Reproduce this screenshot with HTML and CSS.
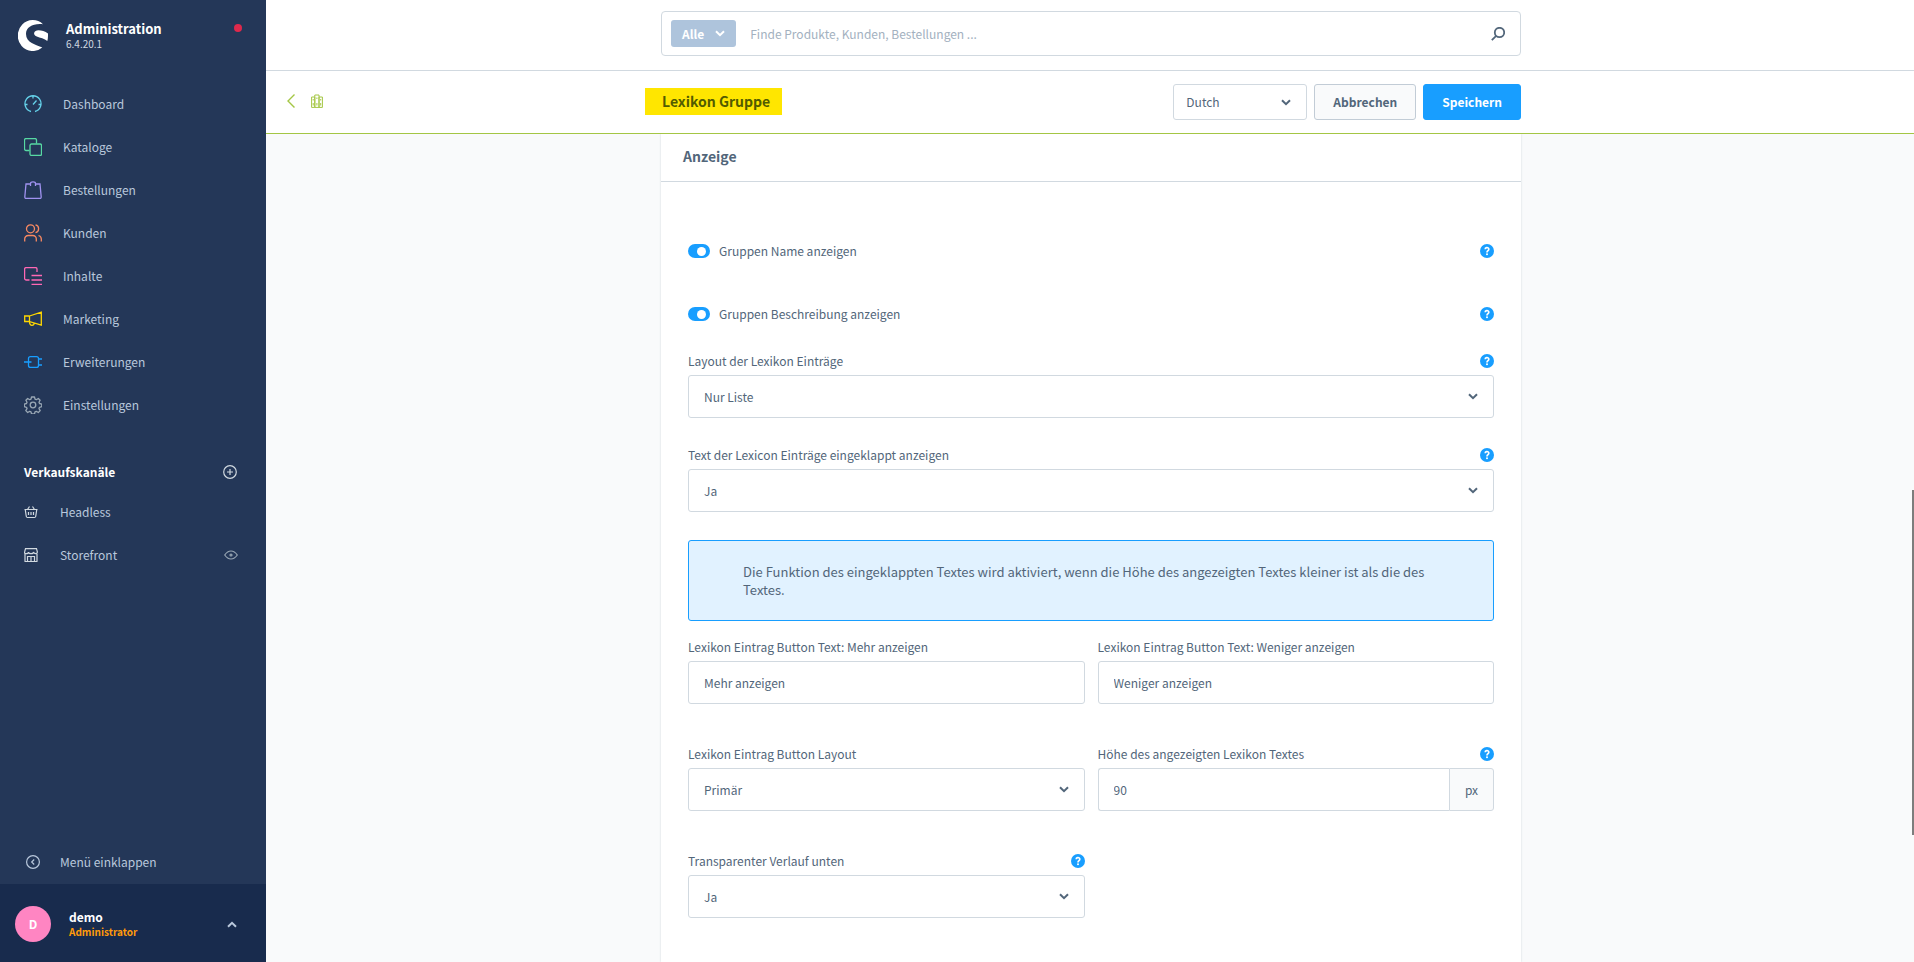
FILE: index.html
```html
<!DOCTYPE html>
<html lang="de">
<head>
<meta charset="utf-8">
<meta name="viewport" content="width=device-width, initial-scale=1">
<title>Lexikon Gruppe | Administration</title>
<link rel="stylesheet" href="styles.css">
</head>
<body>
<svg class="sprite" aria-hidden="true">
  <symbol id="chevron" viewBox="0 0 10 7"><path d="M1 1.2 5 5.2 9 1.2" fill="none" stroke="currentColor" stroke-width="2"/></symbol>
  <symbol id="help" viewBox="0 0 14 14"><circle cx="7" cy="7" r="7" fill="#189eff"/><path d="M5.200 5.300a1.800 1.700 0 1 1 2.700 1.400Q7 7.200 7 8.400" fill="none" stroke="#fff" stroke-width="1.700"/><circle cx="7" cy="10.300" r="1" fill="#fff"/></symbol>
</svg>
<div class="app">
  <aside class="sidebar">
    <header class="brand">
      <svg class="brand-logo" viewBox="0 0 30 31"><path fill="#fff" d="M25 4.200A15 15.500 0 1 0 24.300 27.500C18 24.500 8 23 8 14 8 7 15 3.200 25 4.200Z"/><path fill="#fff" d="M30 13.500v2.500q0 2.500-.7 5c-2.500-2.200-7.500-3.300-10.500-4.500-4.500-2-3-6.300 1.700-6.300 3 0 6.500.8 9.500 3.300Z"/></svg>
      <div class="brand-text">
        <strong class="brand-name">Administration</strong>
        <span class="brand-version">6.4.20.1</span>
      </div>
      <span class="status-dot"></span>
    </header>
    <nav class="nav">
      <a class="nav-item" href="#"><svg class="nav-icon c-cyan" viewBox="0 0 18 18"><path d="M7 16.500A8 8 0 1 1 11 16.500M9 1v2.500M1 9.500h2.500M17 9.500h-2.500M9 9.500l3.500-4"/></svg>Dashboard</a>
      <a class="nav-item" href="#"><svg class="nav-icon c-green" viewBox="0 0 18 18"><rect x="6" y="6" width="11.500" height="11.500" rx="1.500"/><path d="M5.500 12.500H2A1.500 1.500 0 0 1 .5 11V2A1.500 1.500 0 0 1 2 .5h9A1.500 1.500 0 0 1 12.500 2v3.500"/></svg>Kataloge</a>
      <a class="nav-item" href="#"><svg class="nav-icon c-violet" viewBox="0 0 18 18"><path d="M4.500 3H2L.8 16q0 1.500 1.500 1.500h13.400q1.500 0 1.500-1.500L16 3h-2.500M6.500 5V2.500Q6.500.8 9 .8t2.500 1.700V5M6.500 3h-2M11.500 3h2"/></svg>Bestellungen</a>
      <a class="nav-item" href="#"><svg class="nav-icon c-orange" viewBox="0 0 18 18"><circle cx="6.500" cy="4.800" r="4"/><path d="M.7 17.500v-2.500a3.500 3.500 0 0 1 3.500-3.500h4.600a3.500 3.500 0 0 1 3.500 3.500v2.500M11.500.9a4 4 0 0 1 0 7.800M14.500 11.500q2.800.8 2.800 3.500v2.500"/></svg>Kunden</a>
      <a class="nav-item" href="#"><svg class="nav-icon c-pink" viewBox="0 0 18 18"><path d="M5.500 13H2A1.500 1.500 0 0 1 .6 11.500V2A1.500 1.500 0 0 1 2 .6h9.500A1.500 1.500 0 0 1 13 2v3M7.500 8.500H18M7.500 13H18M7.500 17.400H18"/></svg>Inhalte</a>
      <a class="nav-item" href="#"><svg class="nav-icon c-yellow" viewBox="0 0 18 18"><path d="M5.500 6 17.300 2.200v13L5.500 11.500ZM5.500 6H.7v5.500h4.800M5.500 11.500q0 3.800 2.500 3.800 2 0 2.300-2.300"/></svg>Marketing</a>
      <a class="nav-item" href="#"><svg class="nav-icon c-blue" viewBox="0 0 18 18"><rect x="4.500" y="3.600" width="10" height="10.800" rx="2"/><path d="M0 9h7.500M14.500 6H18M14.500 12H18"/></svg>Erweiterungen</a>
      <a class="nav-item" href="#"><svg class="nav-icon c-grey" viewBox="0 0 18 18"><circle cx="9" cy="9" r="2.800"/><path d="M7.500 1h3l.5 2.200 1.300.5 2-1.200 1.800 1.800-1.100 2 .5 1.200 2.300.6v2.600l-2.300.6-.5 1.300 1.200 2-1.900 1.900-2-1.200-1.300.5-.5 2.200h-3L7 15.800l-1.300-.5-2 1.200-1.900-1.900 1.200-2-.5-1.300-2.200-.6V8.100l2.200-.6.5-1.200-1.100-2 1.800-1.800 2 1.200L7 3.200Z" stroke-linejoin="round"/></svg>Einstellungen</a>
    </nav>
    <section class="channels">
      <div class="channels-head">
        <h2 class="channels-title">Verkaufskanäle</h2>
        <button class="icon-button" type="button" aria-label="Verkaufskanal hinzufügen"><svg class="icon-m" viewBox="0 0 14 14"><circle cx="7" cy="7" r="6.300"/><path d="M7 4v6M4 7h6"/></svg></button>
      </div>
      <a class="channel" href="#"><svg class="icon-m" viewBox="0 0 14 14"><path d="M.5 4.500h13M1.300 5l1 6.500q.2 1 1.200 1h7q1 0 1.200-1l1-6.500M4.500 7v3M7 7v3M9.500 7v3M3.500 4.500 5.500 1.500M10.500 4.500 8.500 1.500"/></svg>Headless</a>
      <a class="channel" href="#"><svg class="icon-m" viewBox="0 0 14 14"><path d="M1 13.500V6M13 13.500V6M.5 13.500h13M1.500.6h11l.9 3.400q0 1.700-1.700 1.700T9.500 4q0 1.700-2.500 1.700T4.500 4q0 1.700-2.200 1.700T.6 4ZM3.500 13.500v-5h7v5M7 8.500v5"/></svg><span class="channel-name">Storefront</span><svg class="icon-m icon-eye" viewBox="0 0 14 14"><path d="M.7 7Q3.500 3 7 3t6.300 4Q10.500 11 7 11T.7 7Z"/><circle cx="7" cy="7" r="1"/></svg></a>
    </section>
    <button class="collapse" type="button"><svg class="icon-m" viewBox="0 0 14 14"><circle cx="7" cy="7" r="6.400"/><path d="M8.200 4.500 5.700 7l2.500 2.500"/></svg>Menü einklappen</button>
    <button class="user" type="button">
      <span class="avatar">D</span>
      <span class="user-text"><span class="user-name">demo</span><span class="user-role">Administrator</span></span>
      <svg class="chevron chevron-up"><use href="#chevron"/></svg>
    </button>
  </aside>

  <main class="main">
    <div class="topbar">
      <form class="search">
        <button class="search-type" type="button">Alle<svg class="chevron"><use href="#chevron"/></svg></button>
        <input class="search-input" type="search" placeholder="Finde Produkte, Kunden, Bestellungen ..." aria-label="Suche">
        <svg class="search-icon" viewBox="0 0 14 14"><circle cx="8.500" cy="5.500" r="4.700"/><path d="M5.200 8.800.8 13.200"/></svg>
      </form>
    </div>
    <div class="smartbar">
      <div class="smartbar-back">
        <a class="back-link" href="#" aria-label="Zurück"><svg class="back-icon" viewBox="0 0 8 14"><path d="M7.500.5 1 7l6.500 6.500"/></svg></a>
        <svg class="module-icon" viewBox="0 0 12 14"><path d="M.6 3h3.200v10.400H.6ZM3.800 1h4.200v12.400H3.800ZM8 3h3.400v10.400H8ZM2.200 9v2.500M5.900 9v2.500M9.700 9v2.500M2.200 5v1.500M5.900 3.500V5M9.700 5v1.500"/></svg>
      </div>
      <div class="smartbar-content">
        <h1 class="title"><mark class="title-mark">Lexikon Gruppe</mark></h1>
        <div class="actions">
          <span class="select select-small"><select aria-label="Sprache"><option>Dutch</option></select><svg class="chevron"><use href="#chevron"/></svg></span>
          <button class="button" type="button">Abbrechen</button>
          <button class="button button-primary" type="button">Speichern</button>
        </div>
      </div>
    </div>
    <div class="content">
      <section class="card">
        <h2 class="card-title">Anzeige</h2>
        <form class="card-body">
          <div class="switch-row">
            <input class="switch" type="checkbox" id="show-name" checked><label for="show-name">Gruppen Name anzeigen</label>
            <svg class="help"><use href="#help"/></svg>
          </div>
          <div class="switch-row">
            <input class="switch" type="checkbox" id="show-description" checked><label for="show-description">Gruppen Beschreibung anzeigen</label>
            <svg class="help"><use href="#help"/></svg>
          </div>
          <div class="field field-wide">
            <div class="field-head"><label for="layout">Layout der Lexikon Einträge</label><svg class="help"><use href="#help"/></svg></div>
            <span class="select"><select id="layout"><option>Nur Liste</option></select><svg class="chevron"><use href="#chevron"/></svg></span>
          </div>
          <div class="field field-wide">
            <div class="field-head"><label for="collapsed">Text der Lexicon Einträge eingeklappt anzeigen</label><svg class="help"><use href="#help"/></svg></div>
            <span class="select"><select id="collapsed"><option>Ja</option></select><svg class="chevron"><use href="#chevron"/></svg></span>
          </div>
          <p class="alert">Die Funktion des eingeklappten Textes wird aktiviert, wenn die Höhe des angezeigten Textes kleiner ist als die des Textes.</p>
          <div class="field-grid">
            <div class="field">
              <div class="field-head"><label for="more">Lexikon Eintrag Button Text: Mehr anzeigen</label></div>
              <input class="text-input" type="text" id="more" value="Mehr anzeigen">
            </div>
            <div class="field">
              <div class="field-head"><label for="less">Lexikon Eintrag Button Text: Weniger anzeigen</label></div>
              <input class="text-input" type="text" id="less" value="Weniger anzeigen">
            </div>
            <div class="field">
              <div class="field-head"><label for="button-layout">Lexikon Eintrag Button Layout</label></div>
              <span class="select"><select id="button-layout"><option>Primär</option></select><svg class="chevron"><use href="#chevron"/></svg></span>
            </div>
            <div class="field">
              <div class="field-head"><label for="text-height">Höhe des angezeigten Lexikon Textes</label><svg class="help"><use href="#help"/></svg></div>
              <div class="unit-input"><input class="text-input" type="text" id="text-height" value="90"><span class="unit">px</span></div>
            </div>
            <div class="field">
              <div class="field-head"><label for="gradient">Transparenter Verlauf unten</label><svg class="help"><use href="#help"/></svg></div>
              <span class="select"><select id="gradient"><option>Ja</option></select><svg class="chevron"><use href="#chevron"/></svg></span>
            </div>
          </div>
        </form>
      </section>
    </div>
    <span class="scroll-thumb"></span>
  </main>
</div>
</body>
</html>
```

FILE: styles.css
```css
* { box-sizing: border-box; }

body {
  margin: 0;
  color: #52667a;
  background: #f9fafb;
  font-family: "Noto Sans CJK SC", "Noto Sans", sans-serif;
  font-size: 12px;
  line-height: 20px;
}

button, input, select { font: inherit; color: inherit; }
button { cursor: pointer; }
a { color: inherit; text-decoration: none; }
h1, h2, p { margin: 0; }
svg { flex: none; }
.sprite { display: none; }

.app { display: flex; height: 100vh; overflow: hidden; }

/* Sidebar */
.sidebar {
  flex: none;
  display: flex;
  flex-direction: column;
  width: 266px;
  color: #b9c8dc;
  background: #243758;
}
.brand { display: flex; gap: 18px; padding: 20px 24px 0 18px; height: 82px; }
.brand-logo { width: 30px; height: 31px; }
.brand-text { display: flex; flex-direction: column; flex: 1; }
.brand-name { color: #fff; font-size: 13px; line-height: 17px; }
.brand-version { color: #d1d9e0; font-size: 10px; line-height: 14px; }
.status-dot { width: 8px; height: 8px; margin-top: 4px; border-radius: 50%; background: #de294c; }

.nav-item { display: flex; align-items: center; gap: 21px; height: 43px; padding-left: 24px; }
.nav-icon { width: 18px; height: 18px; fill: none; stroke: currentColor; stroke-width: 1.3; }
.c-cyan { color: #65d2ea; }
.c-green { color: #57d9a3; }
.c-violet { color: #a092f0; }
.c-orange { color: #f88962; }
.c-pink { color: #ff68b4; }
.c-yellow { color: #ffd700; }
.c-blue { color: #189eff; }
.c-grey { color: #9aa8b5; }

.channels { padding: 28px 24px 0; }
.channels-head { display: flex; align-items: center; justify-content: space-between; padding-right: 5px; height: 36px; }
.channels-title { color: #fff; font-size: 12px; font-weight: 700; }
.icon-button { display: flex; padding: 0; border: 0; color: #d1d9e0; background: none; }
.icon-m { width: 14px; height: 14px; fill: none; stroke: currentColor; stroke-width: 1.2; }
.channel { display: flex; align-items: center; gap: 22px; height: 43px; }
.channel .icon-m { color: #d1d9e0; }
.channel-name { flex: 1; }
.channel .icon-eye { margin-right: 4px; color: #9aa8b5; }

.collapse {
  display: flex;
  align-items: center;
  gap: 20px;
  height: 44px;
  margin-top: auto;
  padding: 0 26px;
  border: 0;
  background: none;
}
.user {
  display: flex;
  align-items: center;
  gap: 18px;
  height: 78px;
  padding: 2px 29px 0 15px;
  border: 0;
  text-align: left;
  background: #182b4d;
}
.avatar {
  display: grid;
  place-items: center;
  width: 36px;
  height: 36px;
  border-radius: 50%;
  color: #fff;
  background: #ff85c2;
  font-weight: 700;
}
.user-text { display: flex; flex-direction: column; flex: 1; font-weight: 700; line-height: 15px; }
.user-name { color: #fff; }
.user-role { color: #ff9a0a; font-size: 10px; }
.chevron { width: 10px; height: 7px; }
.chevron-up { transform: rotate(180deg); }

/* Header */
.main { position: relative; display: flex; flex-direction: column; flex: 1; min-width: 0; }
.topbar { flex: none; padding: 11px 20px 14px 22px; border-bottom: 1px solid #d1d9e0; background: #fff; }
.search {
  display: flex;
  align-items: center;
  gap: 14px;
  width: 100%;
  max-width: 860px;
  height: 45px;
  margin: 0 auto;
  padding: 0 15px 0 9px;
  border: 1px solid #d1d9e0;
  border-radius: 4px;
}
.search-type {
  display: flex;
  align-items: center;
  gap: 11px;
  height: 27px;
  padding: 0 11px;
  border: 0;
  border-radius: 3px;
  color: #fff;
  background: #aec4dc;
  font-weight: 700;
}
.search-input { flex: 1; min-width: 0; padding: 0; border: 0; outline: 0; background: none; }
.search-input::placeholder { color: #a3b1c0; opacity: 1; }
.search-icon { width: 14px; height: 14px; fill: none; stroke: #52667a; stroke-width: 1.8; }

.smartbar {
  flex: none;
  display: grid;
  grid-template-columns: 1fr minmax(0, 860px) 1fr;
  align-items: center;
  height: 63px;
  padding-left: 2px;
  border-bottom: 1px solid #a4c644;
  background: #fff;
}
.smartbar-back { display: flex; align-items: center; gap: 16px; padding: 0 0 2px 19px; color: #a4c644; }
.back-link { display: flex; }
.back-icon { width: 8px; height: 14px; fill: none; stroke: currentColor; stroke-width: 1.4; }
.module-icon { width: 12px; height: 14px; fill: none; stroke: currentColor; }
.smartbar-content { display: flex; align-items: center; justify-content: space-between; }
.title { margin-left: -16px; padding-bottom: 2px; font-size: 14px; font-weight: 700; line-height: 27px; }
.title-mark { display: block; padding: 0 12px 0 17px; color: #525c00; background: #ffe600; }
.actions { display: flex; gap: 7px; }
.button {
  height: 36px;
  padding: 0 18px;
  border: 1px solid #c2ccd6;
  border-radius: 3px;
  background: #f9fafb;
  font-weight: 700;
}
.button-primary { border-color: #189eff; color: #fff; background: #189eff; }

/* Form controls */
.select { display: grid; align-items: center; }
.select select {
  grid-area: 1 / 1;
  width: 100%;
  height: 43px;
  padding: 0 36px 0 15px;
  border: 1px solid #d1d9e0;
  border-radius: 3px;
  appearance: none;
  background: #fff;
}
.select .chevron { grid-area: 1 / 1; justify-self: end; margin-right: 16px; pointer-events: none; }
.select-small { width: 134px; }
.select-small select { height: 36px; padding-left: 12px; }
.text-input {
  width: 100%;
  min-width: 0;
  height: 43px;
  padding: 0 15px;
  border: 1px solid #d1d9e0;
  border-radius: 3px;
  background: #fff;
}
.unit-input { display: flex; }
.unit-input .text-input { flex: 1; border-right: 0; border-radius: 3px 0 0 3px; }
.unit {
  display: grid;
  place-items: center;
  width: 45px;
  border: 1px solid #d1d9e0;
  border-radius: 0 3px 3px 0;
  background: #f9fafb;
}
.switch {
  display: flex;
  align-items: center;
  justify-content: flex-end;
  width: 22px;
  height: 14px;
  margin: 0;
  padding-right: 4px;
  border-radius: 7px;
  appearance: none;
  background: #189eff;
}
.switch::before { content: ""; width: 9px; height: 9px; border-radius: 50%; background: #fff; }
.help { width: 14px; height: 14px; margin-left: auto; }

/* Card */
.content { flex: 1; display: flex; justify-content: center; min-height: 0; padding-left: 2px; overflow: hidden; }
.card { flex: 0 1 860px; background: #fff; box-shadow: 0 0 2px rgba(60, 80, 100, 0.2); }
.card-title { padding: 12px 22px 15px; border-bottom: 1px solid #d1d9e0; font-size: 14px; font-weight: 700; }
.card-body { padding: 59px 27px 40px; }
.switch-row { display: flex; align-items: center; gap: 9px; margin-bottom: 43px; }
.switch-row + .field { margin-top: -16px; }
.field-wide { margin-bottom: 27px; }
.field-head { display: flex; align-items: center; height: 20px; margin-bottom: 4px; }
.alert {
  margin: 28px 0 16px;
  padding: 22px 54px 21px;
  border: 1px solid #189eff;
  border-radius: 3px;
  background: #e1f2ff;
  font-size: 13px;
  line-height: 18px;
}
.field-grid { display: grid; grid-template-columns: 1fr 1fr; gap: 40px 13px; }

.scroll-thumb { position: absolute; right: 0; top: 490px; width: 2px; height: 345px; background: #7d7d7d; }
```
